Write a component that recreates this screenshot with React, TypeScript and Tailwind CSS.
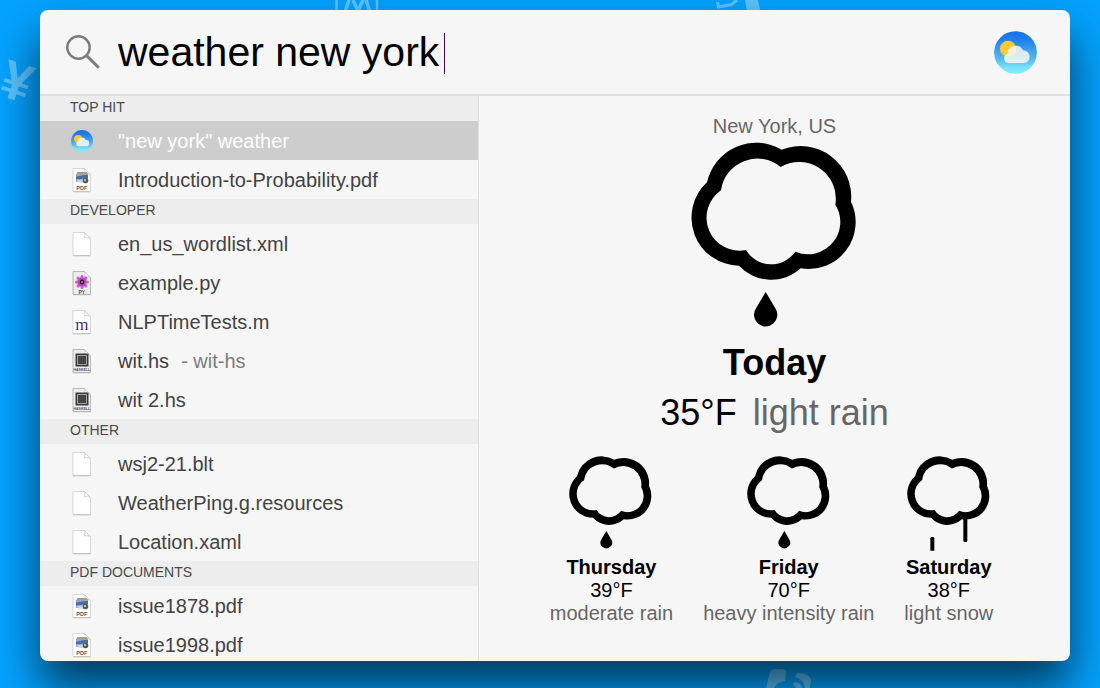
import React, { useState } from "react";

type IconKind = "weather" | "pdf" | "blank" | "python" | "objc" | "haskell";
type Item = { title: string; icon: IconKind; note?: string };
type Group = { label: string; items: Item[] };
type Sky = "rain" | "snow";

const groups: Group[] = [
  {
    label: "TOP HIT",
    items: [
      { title: '"new york" weather', icon: "weather" },
      { title: "Introduction-to-Probability.pdf", icon: "pdf" },
    ],
  },
  {
    label: "DEVELOPER",
    items: [
      { title: "en_us_wordlist.xml", icon: "blank" },
      { title: "example.py", icon: "python" },
      { title: "NLPTimeTests.m", icon: "objc" },
      { title: "wit.hs", icon: "haskell", note: "- wit-hs" },
      { title: "wit 2.hs", icon: "haskell" },
    ],
  },
  {
    label: "OTHER",
    items: [
      { title: "wsj2-21.blt", icon: "blank" },
      { title: "WeatherPing.g.resources", icon: "blank" },
      { title: "Location.xaml", icon: "blank" },
    ],
  },
  {
    label: "PDF DOCUMENTS",
    items: [
      { title: "issue1878.pdf", icon: "pdf" },
      { title: "issue1998.pdf", icon: "pdf" },
    ],
  },
];

const forecast: { day: string; temp: string; text: string; sky: Sky }[] = [
  { day: "Thursday", temp: "39°F", text: "moderate rain", sky: "rain" },
  { day: "Friday", temp: "70°F", text: "heavy intensity rain", sky: "rain" },
  { day: "Saturday", temp: "38°F", text: "light snow", sky: "snow" },
];

const WeatherIcon = ({ id, className }: { id: string; className: string }) => (
  <svg viewBox="882 92 129 129" className={className} aria-hidden="true">
    <defs>
      <linearGradient id={id} x1="0" y1="0" x2="0" y2="1">
        <stop offset="0" stopColor="#156fe8" />
        <stop offset="0.2" stopColor="#1f80ec" />
        <stop offset="0.65" stopColor="#56b8ef" />
        <stop offset="0.85" stopColor="#77e2f8" />
        <stop offset="1" stopColor="#86ecfa" />
      </linearGradient>
    </defs>
    <circle cx="946.5" cy="156.5" r="64" fill={`url(#${id})`} />
    <circle cx="924" cy="145" r="24" fill="#ffca2c" />
    <path
      d="M925 188 A14.500 14.500 0 0 1 922 160 A25 25 0 0 1 969 150 A19 19 0 0 1 971 188 Z"
      fill="#f7f7f2"
      fillOpacity="0.86"
    />
  </svg>
);

const FileIcon = ({ kind }: { kind: IconKind }) => {
  if (kind === "weather") {
    return <WeatherIcon id="sky-small" className="w-[22px] h-[22px]" />;
  }
  return (
    <svg viewBox="0 0 22 26" className="w-[22px] h-[26px]" aria-hidden="true">
      <path
        d="M2 1.500h11.500l6 6V24.500H2z"
        fill={kind === "haskell" || kind === "python" ? "#ececec" : "#fff"}
        stroke={kind === "haskell" || kind === "python" ? "#a9a9a9" : "#cfcfcf"}
        strokeWidth="0.8"
      />
      <path d="M2 24.800h17.500" stroke="#b5b5b5" strokeWidth="0.8" />
      <path d="M13.500 1.500c.6 2 .4 4-.3 5.500 2-.6 4.300-.4 6.300.5z" fill="#f7f7f7" stroke="#c4c4c4" strokeWidth="0.7" />
      {kind === "pdf" && (
        <>
          <path d="M6 5h10l1 2H5.500z" fill="#b39b80" />
          <path d="M5 7h12v8H5z" fill="#8ba9d4" />
          <path d="M5 9.500c4 0 6-2 12-1.500V11c-5 0-7 1.500-12 1.500z" fill="#4d6c9c" />
          <path d="M6 12.500c3 1 6-.5 10-.5v4.500l-9-1z" fill="#c9d6e8" />
          <circle cx="14.500" cy="13.500" r="2.800" fill="#5b5652" />
          <circle cx="14" cy="13" r="1.200" fill="#b8b4b0" />
          <text x="10.800" y="22.500" textAnchor="middle" fontSize="5.500" fill="#555" fontFamily="Liberation Sans, sans-serif" fontWeight="bold">PDF</text>
        </>
      )}
      {kind === "python" && (
        <>
          <g stroke="#cf62d8" strokeWidth="3.200" strokeLinecap="round">
            <path d="M11 6.500v11M5.500 12h11M7.100 8.100l7.800 7.800M14.900 8.100l-7.800 7.800" />
          </g>
          <circle cx="11" cy="12" r="4.500" fill="#b54cc2" />
          <circle cx="11" cy="12" r="2.400" fill="#3a1b30" />
          <circle cx="11" cy="12" r="0.900" fill="#c98a4a" />
          <text x="10.800" y="23.500" textAnchor="middle" fontSize="5" fill="#555" fontFamily="Liberation Sans, sans-serif" fontWeight="bold">PY</text>
        </>
      )}
      {kind === "objc" && (
        <text x="10.800" y="20.500" textAnchor="middle" fontSize="17" fill="#4b2a94" fontFamily="Liberation Serif, serif">m</text>
      )}
      {kind === "haskell" && (
        <>
          <path d="M4.500 5.500h13v13h-13z" fill="#3c3c3c" />
          <path d="M6.500 7.500h9v9h-9z" fill="#444" stroke="#bdbdbd" strokeWidth="0.8" />
          <text x="10.800" y="23" textAnchor="middle" fontSize="3.500" fill="#555" fontFamily="Liberation Sans, sans-serif" fontWeight="bold">HASKELL</text>
        </>
      )}
    </svg>
  );
};

const CloudIcon = ({ sky, className }: { sky: Sky; className: string }) => (
  <svg viewBox="152 96 504 558" className={`overflow-visible ${className}`} aria-hidden="true">
    <path
      fillRule="evenodd"
      d="M200 217 A151 151 0 0 1 424 119 A152 152 0 0 1 632 275 A141 141 0 0 1 481 475 A131 131 0 0 1 296 467 A144 144 0 0 1 200 217 Z
         M242 241 A110 110 0 0 1 421 171 A110 110 0 0 1 585 284 A97 97 0 0 1 465 425 A88 88 0 0 1 317 420 A99 99 0 0 1 242 241 Z"
    />
    {sky === "rain" ? (
      <path d="M376 546 L405 595 A35 35 0 1 1 347 595 Z" />
    ) : (
      <>
        <path d="M292 664V590q0-8 8-8h8q8 0 8 8v74z" />
        <path d="M490 465h24v139q0 8-8 8h-8q-8 0-8-8z" />
      </>
    )}
  </svg>
);

const Backdrop = () => (
  <div className="absolute inset-0 text-white/35" aria-hidden="true">
    <span className="absolute left-0.5 top-[54px] text-[54px] leading-none font-bold rotate-[18deg]">¥</span>
    <svg viewBox="0 0 44 12" className="absolute left-[335px] top-0 w-11 h-3" fill="none" stroke="currentColor">
      <path d="M1.500 0v12M42 0v12" strokeWidth="2.500" />
      <path d="M10 12L14 0M18 0l5 11 5-11M31 0l4 12" strokeWidth="3.500" />
    </svg>
    <svg viewBox="0 0 46 12" className="absolute left-[716px] top-0 w-[46px] h-3" fill="none" stroke="currentColor">
      <path d="M1.500 2l1 5 13-2.500L21 0" strokeWidth="3" />
      <path d="M29 0h13l2.500 12H31z" fill="currentColor" stroke="none" />
    </svg>
    <svg viewBox="0 0 46 20" className="absolute left-[766px] bottom-0 w-[46px] h-5" fill="currentColor">
      <path d="M0 20L4 4Q5 1 9 1L17 1Q20 1.500 20 3L19 13Q11 14 8 20Z" />
      <path d="M31 5Q44 5 45 12L44 20H39Q39 12 29 9Z" />
      <path d="M28 14Q35 14 36 20H30Q30 18 27 17Z" />
    </svg>
  </div>
);

const SearchBar = () => {
  const [query, setQuery] = useState("weather new york");
  return (
    <header className="flex items-center shrink-0 h-[86px] pl-[26px] pr-[33px] border-b-2 border-[#e0e0e0]">
      <svg viewBox="0 0 34 34" className="w-[34px] h-[34px] shrink-0" fill="none" stroke="#7b7b7b" aria-hidden="true">
        <circle cx="12.500" cy="12.500" r="11.200" strokeWidth="2.400" />
        <path d="M20.500 20.500L32.800 32.800" strokeWidth="3" />
      </svg>
      <div className="flex flex-1 items-center min-w-0 ml-[18px]">
        <input
          type="text"
          aria-label="Search"
          value={query}
          onChange={(e) => setQuery(e.target.value)}
          className="field-sizing-content max-w-full text-[41px] leading-[48px] text-black bg-transparent outline-none caret-transparent"
        />
        <span className="w-px h-[41px] ml-[5px] mt-0.5 bg-[#3d0f45]"></span>
      </div>
      <WeatherIcon id="sky-large" className="w-[43px] h-[43px] shrink-0" />
    </header>
  );
};

const ResultList = () => {
  const [selected, setSelected] = useState(groups[0].items[0].title);
  return (
    <nav className="w-[439px] shrink-0 overflow-hidden border-r border-[#e0e0e0]">
      {groups.map((group) => (
        <section key={group.label}>
          <h2 className="flex items-center h-[25px] pl-[30px] pb-1 bg-[#ededed] text-sm text-[#4a4a4a]">
            {group.label}
          </h2>
          <ul>
            {group.items.map((item) => (
              <li key={item.title}>
                <button
                  type="button"
                  onClick={() => setSelected(item.title)}
                  className={`flex items-center w-full h-[39px] pl-[31px] text-left text-xl ${
                    selected === item.title ? "bg-[#cdcdcd] text-white" : "text-[#434343]"
                  }`}
                >
                  <FileIcon kind={item.icon} />
                  <span className="ml-[25px]">{item.title}</span>
                  {item.note && <span className="ml-3 text-[#7d7d7d]">{item.note}</span>}
                </button>
              </li>
            ))}
          </ul>
        </section>
      ))}
    </nav>
  );
};

const WeatherPanel = () => (
  <section className="flex flex-col flex-1 items-center min-w-0 pt-4 text-black">
    <p className="mb-0.5 text-xl leading-7 text-[#666]">New York, US</p>
    <CloudIcon sky="rain" className="w-[168px] h-[186px]" />
    <h1 className="mt-2.5 text-4xl leading-[50px] font-bold">Today</h1>
    <p className="flex gap-4 text-4xl leading-[50px]">
      <span>35°F</span>
      <span className="text-[#666]">light rain</span>
    </p>
    <ul className="flex gap-[30px] mt-[18px] pr-1.5">
      {forecast.map((item) => (
        <li key={item.day} className="flex flex-col items-center text-xl leading-[23px]">
          <CloudIcon sky={item.sky} className="w-[84px] h-[93px] mb-[7px]" />
          <h3 className="font-bold">{item.day}</h3>
          <p>{item.temp}</p>
          <p className="text-[#666]">{item.text}</p>
        </li>
      ))}
    </ul>
  </section>
);

export default function App() {
  return (
    <div className="relative flex h-screen pt-2.5 pr-[30px] pb-[27px] pl-10 bg-[#04a3ff] font-['Liberation_Sans',Arial,sans-serif] overflow-hidden">
      <Backdrop />
      <main className="relative flex flex-col flex-1 min-w-0 rounded-lg bg-[#f6f6f6] overflow-hidden shadow-[0_26px_46px_rgba(0,0,0,0.65)]">
        <SearchBar />
        <div className="flex flex-1 min-h-0">
          <ResultList />
          <WeatherPanel />
        </div>
      </main>
    </div>
  );
}
